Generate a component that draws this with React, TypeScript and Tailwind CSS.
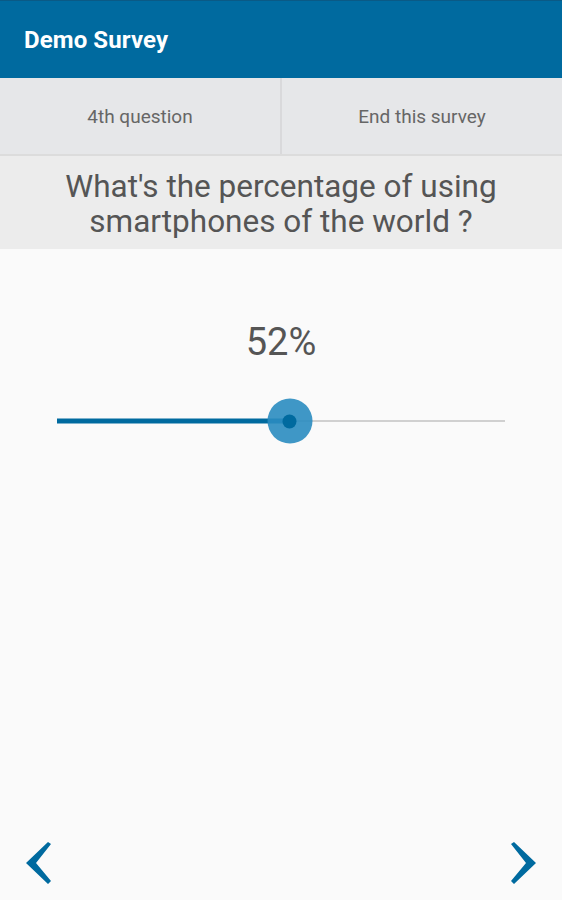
import React from "react";

const value = 52;

const App: React.FC = () => {
  return (
    <div className="w-[562px] h-[900px] flex flex-col bg-[#fafafa] font-['Roboto',sans-serif] overflow-hidden">
      {/* app bar */}
      <div className="h-[78px] shrink-0 bg-[#006a9f] border-t border-[#0a5a86] flex items-center px-6">
        <h1 className="text-white font-bold text-[24px] tracking-[0.1px]">Demo Survey</h1>
      </div>

      {/* tabs */}
      <div className="h-[78px] shrink-0 bg-[#e6e7e9] border-b-2 border-[#dcdcdc] flex">
        <button className="flex-1 pt-[3px] border-r-2 border-[#d9d9db] text-[19px] text-[#666]">4th question</button>
        <button className="flex-1 pt-[3px] text-[19px] text-[#666]">End this survey</button>
      </div>

      {/* question */}
      <div className="h-[93px] shrink-0 bg-[#ececec] flex items-center justify-center pt-[3px]">
        <p className="text-center text-[31.5px] leading-[35px] text-[#555] whitespace-nowrap">
          What's the percentage of using
          <br />
          smartphones of the world ?
        </p>
      </div>

      <div className="flex-1 flex flex-col">
        <div className="mt-[71px] text-center text-[38px] text-[#555] leading-[44px]">{value}%</div>

        {/* slider */}
        <div className="mt-[34px] mx-[57px] h-[46px] relative flex items-center">
          <div className="w-full h-[2px] bg-[#d0d0d0]" />
          <div className="absolute left-0 top-1/2 -translate-y-1/2 h-[5px] bg-[#006a9f]" style={{ width: `${value}%` }} />
          <div
            className="absolute top-1/2 -translate-y-1/2 -translate-x-1/2 w-[45px] h-[45px] rounded-full bg-[#2a8cc0]/90 flex items-center justify-center"
            style={{ left: `${value}%` }}
          >
            <div className="w-[14px] h-[14px] rounded-full bg-[#006a9f]" />
          </div>
        </div>

        <div className="mt-auto flex justify-between items-center px-[24px] pb-[15px]">
          <svg width="28" height="44" viewBox="0 0 28 44">
            <polygon points="24,1 27,3 12,22 27,40 24,43 2,22" fill="#006a9f" />
          </svg>
          <svg width="28" height="44" viewBox="0 0 28 44">
            <polygon points="4,1 1,3 16,22 1,40 4,43 26,22" fill="#006a9f" />
          </svg>
        </div>
      </div>
    </div>
  );
};

export default App;
